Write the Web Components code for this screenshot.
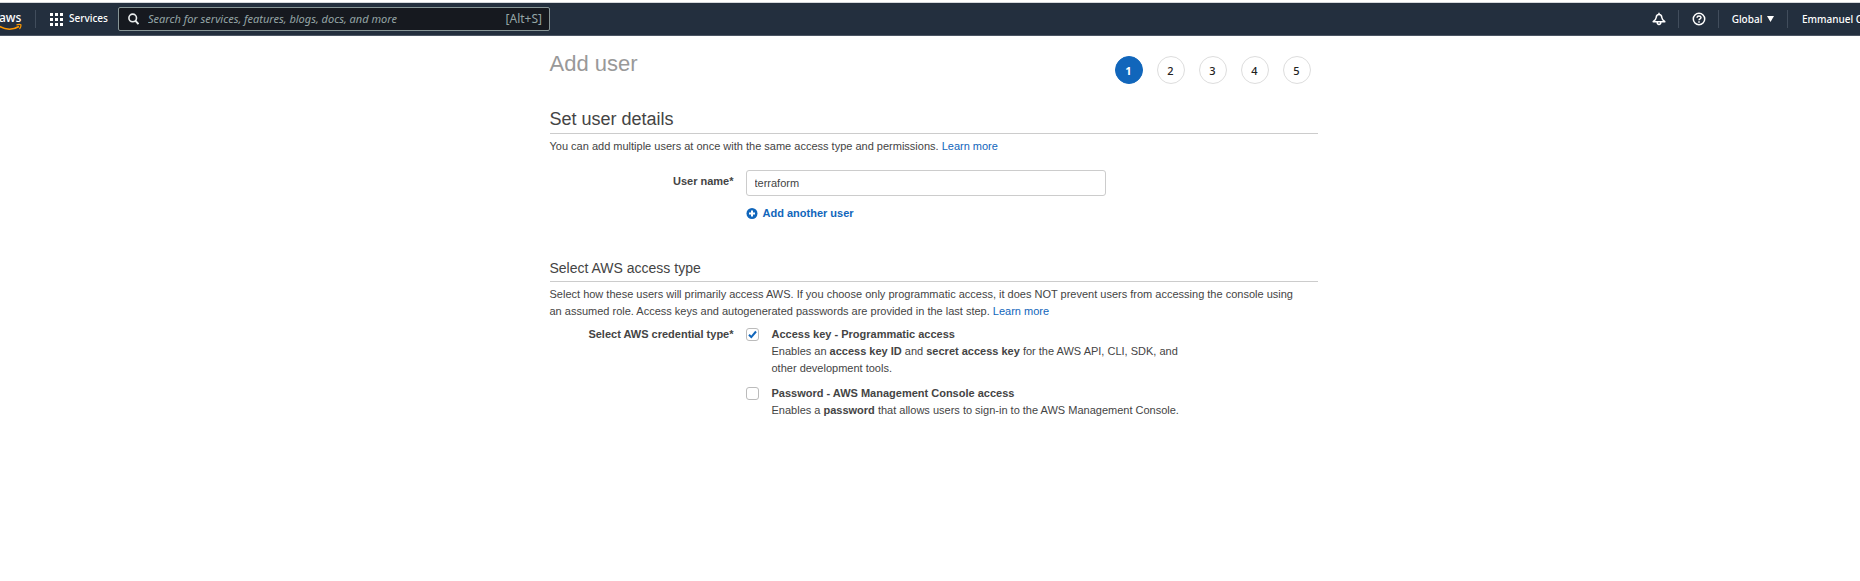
<!DOCTYPE html>
<html lang="en">
<head>
<meta charset="utf-8">
<title>Add user</title>
<style>
body { margin: 0; background: #fff; color: #444; font: 11px/17px "Liberation Sans", Arial, sans-serif; overflow-x: hidden; }
</style>
</head>
<body>
<console-nav></console-nav>
<wizard-page>
  <wizard-header heading="Add user" steps="5" current="1"></wizard-header>
  <form-section heading="Set user details" size="large">
    <span slot="intro">You can add multiple users at once with the same access type and permissions. <text-link>Learn more</text-link></span>
    <user-name-field value="terraform"></user-name-field>
  </form-section>
  <form-section heading="Select AWS access type">
    <span slot="intro">Select how these users will primarily access AWS. If you choose only programmatic access, it does NOT prevent users from accessing the console using an assumed role. Access keys and autogenerated passwords are provided in the last step. <text-link>Learn more</text-link></span>
    <option-group label="Select AWS credential type*">
      <check-option label="Access key - Programmatic access" checked>Enables an <b>access key ID</b> and <b>secret access key</b> for the AWS API, CLI, SDK, and other development tools.</check-option>
      <check-option label="Password - AWS Management Console access">Enables a <b>password</b> that allows users to sign-in to the AWS Management Console.</check-option>
    </option-group>
  </form-section>
</wizard-page>
<script>
class Base extends HTMLElement {
  connectedCallback() {
    if (this.shadowRoot) return;
    this.attachShadow({ mode: "open" }).innerHTML = this.view();
  }
  attr(name) { return this.getAttribute(name) || ""; }
}

customElements.define("console-nav", class extends Base {
  view() { return `
<style>
:host { display: block; padding-top: 2px; font: 500 10px/16px "Noto Sans", sans-serif; color: #fff; }
nav { display: flex; align-items: center; justify-content: space-between; height: 32px; background: #232f3e; border-top: 1px solid #d5d8dc; border-bottom: 1px solid #4b5563; overflow: hidden; }
.side { display: flex; align-items: center; }
svg { display: block; flex: none; }
.logo { width: 21px; height: 26px; margin-right: 14px; }
.rule { width: 1px; height: 18px; background: #414d5c; flex: none; }
a, button { color: inherit; font: inherit; text-decoration: none; background: none; border: 0; padding: 0; display: flex; align-items: center; white-space: nowrap; }
.services { gap: 6px; width: 68px; margin-left: 14px; }
.services span { margin-bottom: 2px; }
.search { display: flex; align-items: center; gap: 9px; box-sizing: border-box; width: 432px; height: 24px; padding: 0 7px 0 9px; background: #16191f; border: 1px solid #879596; border-radius: 2px; color: #95a5a6; font-weight: 400; font-size: 12px; }
input { flex: 1; min-width: 0; padding: 0; border: 0; background: none; color: inherit; font: italic 11px/16px "Noto Sans", sans-serif; outline: none; }
input::placeholder { color: #95a5a6; opacity: 1; }
.icon { width: 39px; justify-content: center; }
.region { width: 68px; justify-content: center; gap: 5px; }
.user { width: 58px; margin-left: 14px; overflow: hidden; }
</style>
<nav>
  <div class="side">
    <a href="#" class="logo" aria-label="AWS home"><svg width="22" height="26" viewBox="0 0 22 26">
      <text x="-1" y="16" font-family="Noto Sans, sans-serif" font-size="12" font-weight="500" fill="#fff">aws</text>
      <path d="M-2 19.500C5 24 13 24 19 20.500" fill="none" stroke="#f90" stroke-width="1.600"/>
      <path d="M16.500 18.800Q20 18 21 18.900Q21.200 21 19.500 23" fill="none" stroke="#f90" stroke-width="1.200"/></svg></a>
    <span class="rule"></span>
    <button class="services"><svg width="13" height="13" viewBox="0 0 13 13" fill="#fff"><path d="M0 0h3v3H0zM5 0h3v3H5zM10 0h3v3h-3zM0 5h3v3H0zM5 5h3v3H5zM10 5h3v3h-3zM0 10h3v3H0zM5 10h3v3H5zM10 10h3v3h-3z"/></svg><span>Services</span></button>
    <label class="search"><svg width="11" height="12" viewBox="0 0 11 12" fill="none" stroke="#eaeded" stroke-width="1.600"><circle cx="4.700" cy="4.900" r="3.800"/><path d="M7.300 7.700L10.500 11.200" stroke-width="2"/></svg>
      <input type="text" aria-label="Search" placeholder="Search for services, features, blogs, docs, and more"><span>[Alt+S]</span></label>
  </div>
  <div class="side">
    <button class="icon" aria-label="Notifications"><svg width="14" height="14" viewBox="0 0 14 14" fill="none" stroke="#fff" stroke-width="1.500" stroke-linejoin="round"><path d="M7 .8V2.500M1.200 9.700C3.800 7.800 4.100 7 4.200 5.500C4.300 3.500 5.400 2.600 7 2.600S9.700 3.500 9.800 5.500C9.900 7 10.200 7.800 12.800 9.700ZM5.300 10V11.200Q7 13.600 8.700 11.200V10"/></svg></button>
    <span class="rule"></span>
    <button class="icon" aria-label="Help"><svg width="14" height="14" viewBox="0 0 14 14" fill="none" stroke="#fff" stroke-width="1.500"><circle cx="7" cy="7" r="5.700"/><path d="M5 5.700Q5.100 4 7 4T9 5.500Q9 6.300 8 6.900T7 8.300M7 9.300V10.700"/></svg></button>
    <span class="rule"></span>
    <button class="region"><span>Global</span><svg width="7" height="6" viewBox="0 0 7 6"><path d="M0 0H7L3.500 6Z" fill="#fff"/></svg></button>
    <span class="rule"></span>
    <button class="user">Emmanuel Og</button>
  </div>
</nav>`; }
});

customElements.define("wizard-page", class extends Base {
  view() { return `
<style>:host { display: block; max-width: 768px; margin: 0 auto; padding: 14px 0 0 7px; }</style><slot></slot>`; }
});

customElements.define("wizard-header", class extends Base {
  view() {
    const current = Number(this.attr("current"));
    let items = "";
    for (let i = 1; i <= Number(this.attr("steps")); i++)
      items += `<li${i === current ? ' aria-current="step"' : ""}>${i}</li>`;
    return `
<style>
:host { display: flex; justify-content: space-between; align-items: flex-start; }
h1 { margin: 0; font: 22px/28px "Liberation Sans", sans-serif; color: #999; }
ol { display: flex; gap: 14px; list-style: none; margin: 6px 7px 0 0; padding: 0; }
li { box-sizing: border-box; width: 28px; height: 28px; border: 1px solid #ddd; border-radius: 50%; text-align: center; font: 500 11px/28px "Noto Sans", sans-serif; color: #222; }
li[aria-current] { background: #1166bb; border-color: #1166bb; color: #fff; font-weight: 700; }
</style><h1>${this.attr("heading")}</h1><ol>${items}</ol>`; }
});

customElements.define("form-section", class extends Base {
  view() { return `
<style>
:host { display: block; padding-top: 36px; }
:host([size=large]) { padding-top: 24px; }
h2 { margin: 0 0 4px; padding-bottom: 3px; border-bottom: 1px solid #ccc; font-weight: 400; font-size: 14px; line-height: 20px; }
:host([size=large]) h2 { font-size: 18px; line-height: 22px; }
p { margin: 0 0 6px; padding-right: 14px; }
</style><h2>${this.attr("heading")}</h2><p><slot name="intro"></slot></p><slot></slot>`; }
});

customElements.define("text-link", class extends Base {
  view() { return `
<style>:host { display: inline; } a { color: #1166bb; text-decoration: none; }</style><a href="#"><slot></slot></a>`; }
});

customElements.define("user-name-field", class extends Base {
  view() { return `
<style>
:host { display: grid; grid-template-columns: 184px 1fr; column-gap: 12px; padding-top: 9px; }
label { text-align: right; font-weight: 700; padding-top: 3px; }
input { box-sizing: border-box; display: block; width: 100%; max-width: 360px; height: 26px; padding: 0 8px; border: 1px solid #ccc; border-radius: 3px; font: 11px/17px "Liberation Sans", sans-serif; color: #444; }
button { display: flex; align-items: center; gap: 5px; margin-top: 9px; padding: 0; border: 0; background: none; color: #1166bb; font: 700 11px/17px "Liberation Sans", sans-serif; }
</style>
<label for="name">User name*</label>
<div><input id="name" type="text" value="${this.attr("value")}">
<button type="button"><svg width="12" height="12" viewBox="0 0 12 12"><circle cx="6" cy="5.500" r="5.500" fill="#1166bb"/><path d="M6 2.500V8.500M3 5.500H9" stroke="#fff" stroke-width="2"/></svg>Add another user</button></div>`; }
});

customElements.define("option-group", class extends Base {
  view() { return `
<style>
:host { display: block; }
div { display: grid; grid-template-columns: 184px minmax(0, 440px); column-gap: 12px; }
#title { text-align: right; font-weight: 700; }
.list { display: flex; flex-direction: column; gap: 8px; }
</style>
<div role="group" aria-labelledby="title"><span id="title">${this.attr("label")}</span><section class="list"><slot></slot></section></div>`; }
});

customElements.define("check-option", class extends Base {
  view() { return `
<style>
:host { display: grid; grid-template-columns: 13px 1fr; column-gap: 13px; }
input { appearance: none; box-sizing: border-box; width: 13px; height: 13px; margin: 2px 0 0; border: 1px solid #bbb; border-radius: 3px; background: #fff; }
.box { display: grid; height: 17px; }
.box > * { grid-area: 1 / 1; }
svg { margin: 4px 0 0 2px; display: none; pointer-events: none; }
input:checked + svg { display: block; }
label { display: block; font-weight: 700; }
</style>
<span class="box"><input id="box" type="checkbox" ${this.hasAttribute("checked") ? "checked" : ""}><svg width="9" height="9" viewBox="0 0 9 9"><path d="M1 4.800L3.300 7.100L8 1.500" fill="none" stroke="#1166bb" stroke-width="2"/></svg></span>
<div><label for="box">${this.attr("label")}</label><slot></slot></div>`; }
});
</script>
</body>
</html>
